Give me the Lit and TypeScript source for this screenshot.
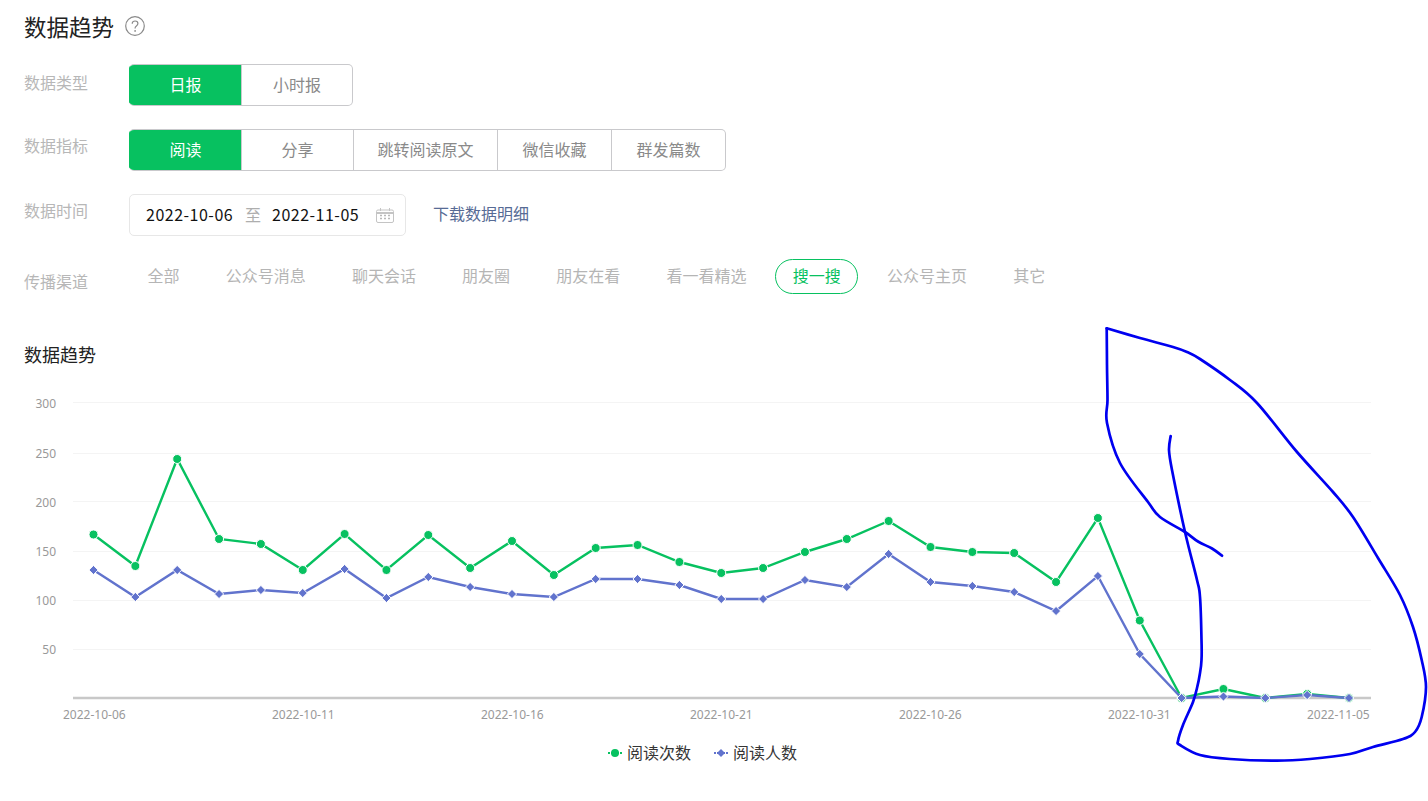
import { LitElement, html, css, svg } from "lit";
import { customElement } from "lit/decorators.js";

const XS = Array.from({ length: 31 }, (_, i) => 93.5 + i * 41.85);
const GREEN = [534.5,566,459,539,544,570,534,570,535,568,541,575,548,545,562,573,568,552,539,521,547,552,553,582,518,620.5,698,689,698,694,698];
const BLUE = [570,597,570,594,590,593,569,598,577,587,594,597,579,579,585,599,599,580,587,554,582,586,592,611,576,654,698,696.5,698,695,698];
const GRID: [string, number, number][] = [["300",402.5,407.5],["250",453.5,457.5],["200",501.5,506.5],["150",551.5,555.5],["100",600.5,605],["50",649.5,654]];
const XLABELS: [string, number][] = [["2022-10-06",63],["2022-10-11",272],["2022-10-16",481],["2022-10-21",690],["2022-10-26",899],["2022-10-31",1108],["2022-11-05",1307]];

const STROKE_A: [number, number][] = [[1170.7,436],[1169,450],[1172,470],[1185,532],[1197,580],[1200,597],[1201.5,640],[1201.5,660],[1200,673],[1197,688],[1193,702],[1183,725],[1178,741],[1180,745],[1200,755],[1230,759],[1277,760.7],[1310,759],[1350,754],[1373,747],[1403,739],[1415,732],[1421.7,717],[1426,687],[1421.7,660],[1413,627],[1400,595],[1378,558],[1353,517],[1333,492],[1297,452],[1257,403],[1230,380],[1200,359],[1187,352],[1173,347],[1140,338],[1106.7,328.3]];
const STROKE_B: [number, number][] = [[1106.7,328.3],[1107,365],[1107.5,400],[1107,423],[1120,463],[1148,502],[1160,517],[1185,532],[1198,541.5],[1212,548.5],[1222,555.7]];

function smooth(p: [number, number][]): string {
  let d = `M${p[0][0]} ${p[0][1]}`;
  for (let i = 0; i < p.length - 1; i++) {
    const a = p[Math.max(i - 1, 0)], b = p[i], c = p[i + 1], e = p[Math.min(i + 2, p.length - 1)];
    const c1x = b[0] + (c[0] - a[0]) / 6, c1y = b[1] + (c[1] - a[1]) / 6;
    const c2x = c[0] - (e[0] - b[0]) / 6, c2y = c[1] - (e[1] - b[1]) / 6;
    d += ` C${c1x.toFixed(1)} ${c1y.toFixed(1)} ${c2x.toFixed(1)} ${c2y.toFixed(1)} ${c[0]} ${c[1]}`;
  }
  return d;
}
const line = (ys: number[]) => ys.map((y, i) => `${XS[i].toFixed(1)},${y}`).join(" ");
const diamond = (x: number, y: number, r = 4.6) => `${x},${y - r} ${x + r},${y} ${x},${y + r} ${x - r},${y}`;

@customElement("app-root")
export class AppRoot extends LitElement {
  static styles = css`
    :host {
      display: block;
      position: relative;
      height: 801px;
      width: 1428px;
      overflow: hidden;
      background: #fff;
      font-family: "Noto Sans CJK SC", "Noto Sans", sans-serif;
    }
    .page { padding-left: 24px; }
    .head { display: flex; align-items: center; gap: 11px; height: 52px; margin-bottom: 12px; }
    .head h1 { margin: 0; font-size: 22.5px; font-weight: 400; color: #222; line-height: 30px; }
    .help { width: 20px; height: 20px; display: block; }
    .row { display: flex; align-items: flex-start; }
    .row + .row { margin-top: 23px; }
    .label { width: 105px; flex: none; font-size: 16px; line-height: 24px; color: #b7b7b7; }
    .l6 { margin-top: 6px; }
    .l4 { margin-top: 4px; }
    .l10 { margin-top: 10px; }
    .seg { display: grid; height: 42px; border: 1px solid #c9c9cc; border-left: none; border-radius: 5px; box-sizing: border-box; overflow: hidden; }
    .seg.type { grid-template-columns: 112px 111px; }
    .seg.metric { grid-template-columns: 112px 112px 144px 114px 114px; }
    .seg span { display: flex; align-items: center; justify-content: center; font-size: 16px; color: #8a8a8a; border-left: 1px solid #c9c9cc; margin-top: -1px; margin-bottom: -1px; padding-bottom: 2px; box-sizing: border-box; }
    .seg span.on { background: #07c160; color: #fff; border-color: #07c160; }
    .row.date { margin-top: 23px; align-items: center; }
    .row.date .label { align-self: flex-start; }
    .datebox { width: 277px; height: 42px; box-sizing: border-box; border: 1px solid #e7e7e7; border-radius: 5px; display: flex; align-items: center; padding: 0 0 2px 16px; font-size: 16px; color: #111; }
    .datebox .d { width: 87px; letter-spacing: 0.5px; white-space: nowrap; }
    .datebox .to { margin: 0 11px 0 12px; color: #aeaeae; }
    .datebox svg { margin: 2px 0 0 17px; display: block; }
    .link { margin-left: 27px; margin-top: -4px; font-size: 16px; color: #576b95; }
    .channels { display: flex; gap: 11.2px; height: 35px; margin-left: 1px; }
    .channels span { height: 35px; box-sizing: border-box; border: 1px solid transparent; border-radius: 18px; padding: 0 16.5px 3px; display: flex; align-items: center; font-size: 16px; color: #b5b5b5; white-space: nowrap; }
    .channels span.on { border-color: #07c160; color: #07c160; }
    .title { margin: 48px 0 0; font-size: 18px; font-weight: 400; line-height: 24px; color: #222; }
    .chart { display: block; margin: 14px 0 0 -24px; width: 1428px; height: 400px; }
    .tick { font-family: "Noto Sans", sans-serif; font-size: 12px; fill: #999; }
    .legend { font-size: 16px; fill: #353535; font-family: "Noto Sans CJK SC", sans-serif; }
    .ink { position: absolute; inset: 0; width: 1428px; height: 801px; pointer-events: none; }
  `;

  render() {
    const channels = ["全部","公众号消息","聊天会话","朋友圈","朋友在看","看一看精选","搜一搜","公众号主页","其它"];
    return html`
      <div class="page">
        <div class="head">
          <h1>数据趋势</h1>
          <svg class="help" viewBox="0 0 20 20">
            <circle cx="10" cy="10" r="9.3" fill="none" stroke="#8a8a8a" stroke-width="1.2"></circle>
            <path d="M7.2 7.8c0-1.7 1.2-2.8 2.9-2.8 1.6 0 2.8 1 2.8 2.5 0 1.2-.7 1.8-1.5 2.4-.8.6-1.3 1-1.3 2.1v.5" fill="none" stroke="#8a8a8a" stroke-width="1.2"></path>
            <circle cx="10.1" cy="14.9" r=".9" fill="#8a8a8a"></circle>
          </svg>
        </div>
        <div class="row">
          <div class="label l6">数据类型</div>
          <div class="seg type"><span class="on">日报</span><span>小时报</span></div>
        </div>
        <div class="row">
          <div class="label l4">数据指标</div>
          <div class="seg metric"><span class="on">阅读</span><span>分享</span><span>跳转阅读原文</span><span>微信收藏</span><span>群发篇数</span></div>
        </div>
        <div class="row date">
          <div class="label l4">数据时间</div>
          <div class="datebox">
            <span class="d">2022-10-06</span><span class="to">至</span><span class="d">2022-11-05</span>
            <svg width="18" height="15" viewBox="0 0 18 15">
              <rect x=".5" y="2" width="17" height="12.5" rx="1.5" fill="#fff" stroke="#c4c4c4"></rect>
              <path d="M.5 5h17" stroke="#c4c4c4" stroke-width="2"></path>
              <path d="M4.5 0v3M13.5 0v3" stroke="#c4c4c4"></path>
              <path d="M4 7.5h2M8 7.5h2M12 7.5h2M4 10.5h2M8 10.5h2M12 10.5h2" stroke="#b8b8b8" stroke-width="1.4"></path>
            </svg>
          </div>
          <div class="link">下载数据明细</div>
        </div>
        <div class="row">
          <div class="label l10">传播渠道</div>
          <div class="channels">
            ${channels.map((c) => html`<span class=${c === "搜一搜" ? "on" : ""}>${c}</span>`)}
          </div>
        </div>
        <h2 class="title">数据趋势</h2>
        <svg class="chart" viewBox="0 380 1428 400">
          ${GRID.map(([t, y, b]) => svg`
            <line x1="73" x2="1371" y1=${y} y2=${y} stroke="#f4f4f4"></line>
            <text class="tick" x="56" y=${b} text-anchor="end">${t}</text>`)}
          <line x1="73" x2="1371" y1="698" y2="698" stroke="#c8c8c8" stroke-width="2.4"></line>
          ${XLABELS.map(([t, x]) => svg`<text class="tick" x=${x} y="719">${t}</text>`)}
          <polyline points=${line(GREEN)} fill="none" stroke="#07c160" stroke-width="2.4"></polyline>
          ${GREEN.map((y, i) => svg`<circle cx=${XS[i]} cy=${y} r="4.5" fill="#07c160" stroke="#fff" stroke-width="1"></circle>`)}
          <polyline points=${line(BLUE)} fill="none" stroke="#6173cd" stroke-width="2.4"></polyline>
          ${BLUE.map((y, i) => svg`<polygon points=${diamond(XS[i], y)} fill="#6173cd" stroke="#fff" stroke-width="1"></polygon>`)}
          <line x1="608" x2="622" y1="753" y2="753" stroke="#07c160" stroke-width="2" stroke-dasharray="2 1"></line>
          <circle cx="615" cy="753" r="4" fill="#07c160"></circle>
          <text class="legend" x="627" y="759">阅读次数</text>
          <line x1="714" x2="728" y1="753" y2="753" stroke="#6173cd" stroke-width="2" stroke-dasharray="2 1"></line>
          <polygon points=${diamond(721, 753, 4)} fill="#6173cd"></polygon>
          <text class="legend" x="733" y="759">阅读人数</text>
        </svg>
      </div>
      <svg class="ink" viewBox="0 0 1428 801">
        <path d=${smooth(STROKE_A)} fill="none" stroke="#0000f0" stroke-width="2.7" stroke-linecap="round" stroke-linejoin="round"></path>
        <path d=${smooth(STROKE_B)} fill="none" stroke="#0000f0" stroke-width="2.7" stroke-linecap="round" stroke-linejoin="round"></path>
      </svg>
    `;
  }
}
